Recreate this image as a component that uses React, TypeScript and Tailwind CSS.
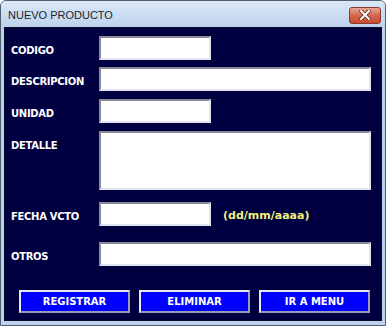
import React from "react";

const labelCls =
  "w-[88px] h-[24px] shrink-0 pl-[6px] pt-[6px] flex items-center text-[10px] font-bold text-white leading-none tracking-[-0.3px]";
const inputCls =
  "h-[24px] bg-white border-2 border-t-[#8a8a99] border-l-[#8a8a99] border-b-[#e4e4f0] border-r-[#e4e4f0]";
const btnCls =
  "w-[111px] h-[23px] bg-[#0000ff] border-2 border-t-[#e8e8f4] border-l-[#e8e8f4] border-b-[#9a9ab4] border-r-[#9a9ab4] text-white text-[10px] font-bold flex items-center justify-center";

export default function App() {
  return (
    <div className="w-[387px] h-[327px] bg-white" style={{ fontFamily: '"DejaVu Sans", sans-serif' }}>
      <div className="w-[386px] h-[326px] rounded-t-[6px] border border-[#4e5f73] bg-[#bcd2ec] flex flex-col overflow-hidden">
        {/* Title bar */}
        <div className="h-[26px] shrink-0 flex items-center justify-between pl-[7px] pr-[4px] bg-gradient-to-b from-[#dbe8f7] to-[#bdd2ec]">
          <span className="text-[11px] text-[#1e1e1e] pt-[3px]" style={{ fontFamily: '"Liberation Sans", sans-serif' }}>
            NUEVO PRODUCTO
          </span>
          <div className="w-[32px] h-[17px] mt-[2px] rounded-[3px] border border-[#8a3a2c] bg-gradient-to-b from-[#e8a493] via-[#d4664c] to-[#c44c30] flex items-center justify-center">
            <svg width="12" height="10" viewBox="0 0 12 10">
              <path d="M2 1 L10 9 M10 1 L2 9" stroke="#5a2418" strokeWidth="3.4" strokeLinecap="square" />
              <path d="M2 1 L10 9 M10 1 L2 9" stroke="#ffffff" strokeWidth="2" strokeLinecap="square" />
            </svg>
          </div>
        </div>
        {/* Client */}
        <div className="flex-1 mx-[3px] mb-[4px] bg-[#000040] border border-[#0c0c30] flex flex-col pt-[8px]">
          <div className="flex">
            <div className={labelCls}>CODIGO</div>
            <div className={inputCls + " w-[112px] ml-[6px]"} />
          </div>
          <div className="flex mt-[7px]">
            <div className={labelCls}>DESCRIPCION</div>
            <div className={inputCls + " w-[272px] ml-[6px]"} />
          </div>
          <div className="flex mt-[8px]">
            <div className={labelCls}>UNIDAD</div>
            <div className={inputCls + " w-[112px] ml-[6px]"} />
          </div>
          <div className="flex mt-[8px] items-start">
            <div className={labelCls}>DETALLE</div>
            <div className={inputCls + " w-[272px] ml-[6px] h-[59px]"} />
          </div>
          <div className="flex mt-[12px] items-start">
            <div className={labelCls + " pt-[2px]"}>FECHA VCTO</div>
            <div className={inputCls + " w-[112px] ml-[6px]"} />
            <div className="ml-[12px] h-[24px] pt-[2px] flex items-center text-[11px] font-bold text-[#f2f07c] leading-none">(dd/mm/aaaa)</div>
          </div>
          <div className="flex mt-[16px]">
            <div className={labelCls}>OTROS</div>
            <div className={inputCls + " w-[272px] ml-[6px]"} />
          </div>
          <div className="flex mt-[24px] pl-[14px] gap-[9px]">
            <div className={btnCls}>REGISTRAR</div>
            <div className={btnCls}>ELIMINAR</div>
            <div className={btnCls}>IR A MENU</div>
          </div>
        </div>
      </div>
    </div>
  );
}
